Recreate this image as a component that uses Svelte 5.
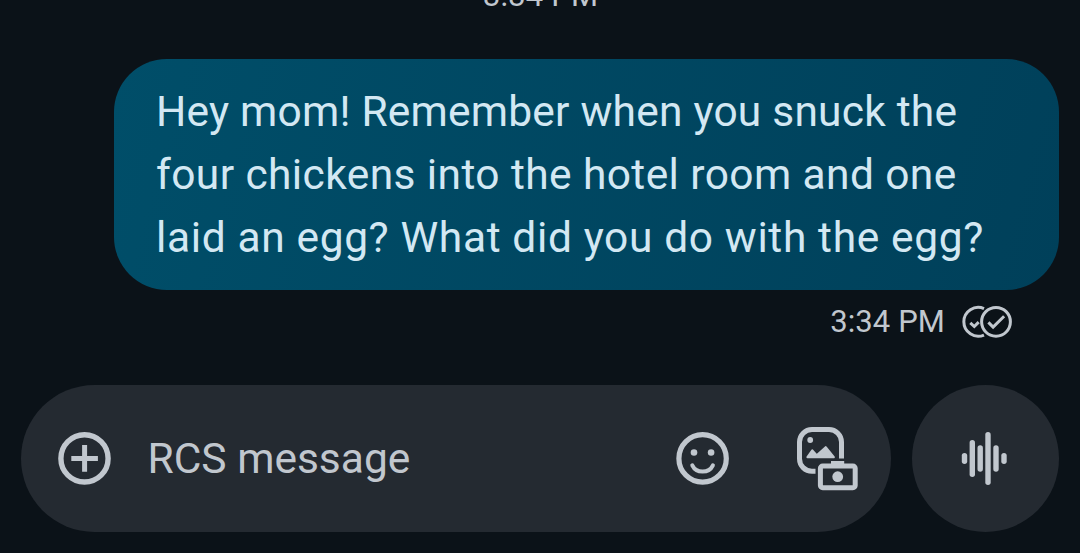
<script>
  const lines = [
    { text: 'Hey mom! Remember when you snuck the', spacing: 0.21 },
    { text: 'four chickens into the hotel room and one', spacing: 0.4 },
    { text: 'laid an egg? What did you do with the egg?', spacing: 0.63 }
  ];
  const bars = [
    { x: 964.5, top: 455.6, bottom: 461.2 },
    { x: 972.3, top: 442.7, bottom: 474.3 },
    { x: 980.2, top: 447.9, bottom: 469 },
    { x: 988, top: 434.7, bottom: 482.2 },
    { x: 996, top: 447.9, bottom: 469 },
    { x: 1004, top: 455.6, bottom: 461.2 }
  ];
</script>

<main>
  <div class="divider">3:34 PM</div>
  <section class="bubble">
    {#each lines as line}
      <div class="line" style="letter-spacing:{line.spacing}px">{line.text}</div>
    {/each}
  </section>
  <div class="status">
    <span class="time">3:34 PM</span>
    <svg width="52" height="36" viewBox="961 304 52 36" fill="none" stroke="#c1c7ce" stroke-width="3">
      <path d="M984 308.6A14.4 14.4 0 1 0 984 335" />
      <path d="M970.3 322.8l4 3.7 4.4-4.4" />
      <circle cx="996" cy="321.8" r="14.4" />
      <path d="M988.4 322.4l4.7 4.7 11-10.8" />
    </svg>
  </div>
  <footer>
    <div class="field">
      <svg class="plus" width="55" height="55" viewBox="57 431 55 55" fill="none" stroke="#c1c7ce">
        <circle cx="84.5" cy="458.4" r="23.6" stroke-width="5.4" />
        <path d="M71.3 458.4h26.6M84.6 445.1v26.6" stroke-width="5" />
      </svg>
      <span class="placeholder">RCS message</span>
      <svg class="smile" width="54" height="55" viewBox="676 431 54 55" fill="none" stroke="#c1c7ce">
        <circle cx="702.6" cy="458.4" r="23.7" stroke-width="5.2" />
        <g fill="#c1c7ce" stroke="none">
          <circle cx="694" cy="452.5" r="3.3" />
          <circle cx="711.1" cy="452.5" r="3.3" />
        </g>
        <path d="M692.3 465.3C696.3 473.7 708.9 473.7 712.9 465.3" stroke-width="4" stroke-linecap="round" />
      </svg>
      <svg class="gallery" width="64" height="67" viewBox="795 425 64 67" fill="none" stroke="#c1c7ce">
        <path d="M815.5 471.3H812A12.5 12.5 0 0 1 799.5 458.8V442A12.5 12.5 0 0 1 812 429.5H829A12.5 12.5 0 0 1 841.5 442V458.5" stroke-width="5" />
        <circle cx="810.2" cy="440" r="2.9" fill="#c1c7ce" stroke="none" />
        <path d="M807.5 457.2L812.3 450.4L816.8 455.4L825.7 447.2L833.8 457.2Z" fill="#c1c7ce" stroke="#c1c7ce" stroke-width="2.2" stroke-linejoin="round" />
        <path d="M831 465V461h13.2v4Z" fill="#c1c7ce" stroke="none" />
        <rect x="820.4" y="466" width="34.8" height="21.7" rx="2.3" stroke-width="5" />
        <circle cx="837.7" cy="476.7" r="5.4" fill="#c1c7ce" stroke="none" />
      </svg>
    </div>
    <div class="voice">
      <svg width="51" height="57" viewBox="960 430 51 57" stroke="#c1c7ce" stroke-width="5.4" stroke-linecap="round">
        {#each bars as bar}
          <line x1={bar.x} x2={bar.x} y1={bar.top} y2={bar.bottom} />
        {/each}
      </svg>
    </div>
  </footer>
</main>

<style>
  :global(body) { margin: 0; background: #0b1218; }
  main {
    box-sizing: border-box;
    width: 1080px;
    height: 553px;
    overflow: hidden;
    display: flex;
    flex-direction: column;
    background: #0b1218;
    color: #c1c7ce;
    font-family: Roboto, sans-serif;
  }
  .divider {
    flex: none;
    height: 81px;
    margin-top: -22px;
    padding-left: 483px;
    font-size: 31px;
    line-height: 36px;
    letter-spacing: 0.15px;
    white-space: nowrap;
  }
  .bubble {
    box-sizing: border-box;
    flex: none;
    width: 945px;
    height: 231px;
    margin-left: 114px;
    padding: 21px 0 0 42px;
    border-radius: 53px;
    background: linear-gradient(105deg, #004e69, #00405a);
    color: #d3e8f3;
  }
  .line { height: 63px; font-size: 42.5px; line-height: 63px; white-space: pre; }
  .status {
    flex: none;
    height: 95px;
    box-sizing: border-box;
    padding: 14px 67px 0 0;
    display: flex;
    justify-content: flex-end;
    align-items: flex-start;
    gap: 16px;
  }
  .time { font-size: 31px; line-height: 36px; letter-spacing: 0.1px; }
  footer { display: flex; padding-left: 21px; gap: 21px; }
  .field, .voice { height: 147px; background: #242a31; display: flex; align-items: center; }
  .field { box-sizing: border-box; width: 870px; padding: 0 32px 0 36px; border-radius: 74px; }
  .voice { width: 147px; justify-content: center; border-radius: 50%; }
  .placeholder { margin-left: 35.5px; font-size: 42.5px; line-height: 60px; white-space: pre; }
  .smile { margin-left: auto; }
  .gallery { margin-left: 65px; }
  svg { flex: none; display: block; }
</style>
